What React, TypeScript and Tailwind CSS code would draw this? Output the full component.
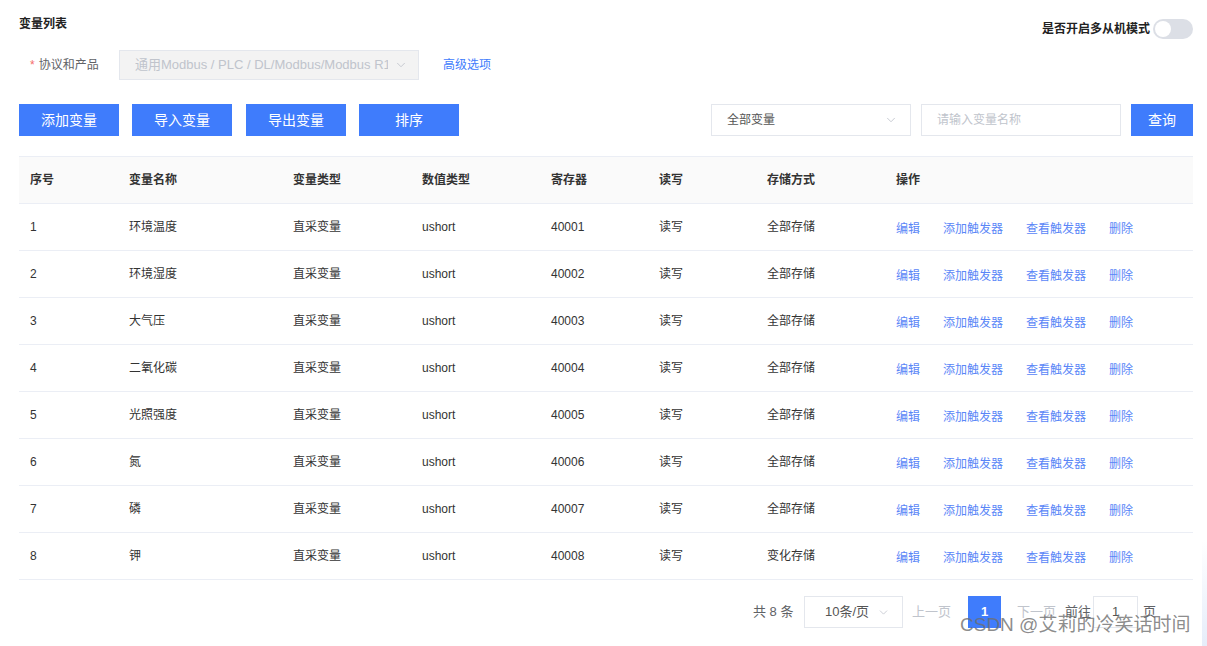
import { ChevronDown } from "lucide-react";

type Row = {
  id: number;
  name: string;
  register: string;
  storage: string;
};

const rows: Row[] = [
  { id: 1, name: "环境温度", register: "40001", storage: "全部存储" },
  { id: 2, name: "环境湿度", register: "40002", storage: "全部存储" },
  { id: 3, name: "大气压", register: "40003", storage: "全部存储" },
  { id: 4, name: "二氧化碳", register: "40004", storage: "全部存储" },
  { id: 5, name: "光照强度", register: "40005", storage: "全部存储" },
  { id: 6, name: "氮", register: "40006", storage: "全部存储" },
  { id: 7, name: "磷", register: "40007", storage: "全部存储" },
  { id: 8, name: "钾", register: "40008", storage: "变化存储" }
];

const columns = ["序号", "变量名称", "变量类型", "数值类型", "寄存器", "读写", "存储方式", "操作"];
const colWidths = ["w-[99px]", "w-[164px]", "w-[129px]", "w-[129px]", "w-[108px]", "w-[108px]", "w-[129px]", "flex-1"];

function PrimaryButton({ label, className }: { label: string; className: string }) {
  return (
    <button
      type="button"
      className={`h-[32px] bg-[#3f7cfc] text-[14px] text-white flex items-center justify-center ${className}`}
    >
      {label}
    </button>
  );
}

export default function App() {
  return (
    <div className="relative w-[1207px] h-[646px] overflow-hidden bg-white font-['Liberation_Sans','Noto_Sans_CJK_SC',sans-serif] text-[12px] text-[#333]">
      <div className="pl-[19px] pr-[14px]">
        <div className="flex justify-between">
          <div className="pt-[17px] leading-[14px] font-bold text-[#222]">变量列表</div>
          <div className="flex items-center pt-[19px] gap-[3px]">
            <span className="font-bold text-[#222] leading-[20px]">是否开启多从机模式</span>
            <span className="relative w-[40px] h-[20px] rounded-full bg-[#dcdfe6]">
              <span className="absolute left-[2px] top-[2px] w-[16px] h-[16px] rounded-full bg-white" />
            </span>
          </div>
        </div>

        <div className="mt-[11px] flex items-center h-[30px]">
          <div className="w-[100px] pl-[11px] text-[#606266]">
            <span className="text-[#f56c6c] mr-[4px]">*</span>协议和产品
          </div>
          <div className="w-[300px] h-[30px] border border-[#e4e7ed] bg-[#f3f3f3] flex items-center pl-[15px] pr-[10px] text-[#c0c4cc] text-[13px]">
            <span className="flex-1 min-w-0 whitespace-nowrap overflow-hidden">通用Modbus / PLC / DL/Modbus/Modbus R1</span>
            <ChevronDown size={14} strokeWidth={1.5} className="text-[#c0c4cc] ml-[6px] shrink-0" />
          </div>
          <span className="ml-[24px] text-[#3f7cfc]">高级选项</span>
        </div>

        <div className="mt-[24px] flex items-center">
          <div className="flex">
            <PrimaryButton label="添加变量" className="w-[100px]" />
            <PrimaryButton label="导入变量" className="w-[100px] ml-[13px]" />
            <PrimaryButton label="导出变量" className="w-[100px] ml-[14px]" />
            <PrimaryButton label="排序" className="w-[100px] ml-[13px]" />
          </div>
          <div className="ml-auto flex items-center gap-[10px]">
            <div className="w-[200px] h-[32px] border border-[#e4e7ed] flex items-center pl-[15px] pr-[12px]">
              <span className="flex-1 text-[#555]">全部变量</span>
              <ChevronDown size={14} strokeWidth={1.5} className="text-[#c0c4cc]" />
            </div>
            <div className="w-[200px] h-[32px] border border-[#e4e7ed] flex items-center pl-[15px] text-[#c0c4cc]">
              请输入变量名称
            </div>
            <PrimaryButton label="查询" className="w-[62px]" />
          </div>
        </div>

        <div className="mt-[20px] border-t border-[#ebeef5]">
          <div className="flex h-[47px] items-center bg-[#fafafa] border-b border-[#ebeef5] font-bold">
            {columns.map((c, i) => (
              <div key={c} className={`${colWidths[i]} pl-[11px]`}>
                {c}
              </div>
            ))}
          </div>
          {rows.map((r) => (
            <div key={r.id} className="flex h-[47px] items-center border-b border-[#ebeef5]">
              <div className={`${colWidths[0]} pl-[11px]`}>{r.id}</div>
              <div className={`${colWidths[1]} pl-[11px]`}>{r.name}</div>
              <div className={`${colWidths[2]} pl-[11px]`}>直采变量</div>
              <div className={`${colWidths[3]} pl-[11px]`}>ushort</div>
              <div className={`${colWidths[4]} pl-[11px]`}>{r.register}</div>
              <div className={`${colWidths[5]} pl-[11px]`}>读写</div>
              <div className={`${colWidths[6]} pl-[11px]`}>{r.storage}</div>
              <div className={`${colWidths[7]} pl-[11px] pt-[3px] flex gap-[23px] text-[#5a86f7]`}>
                <span>编辑</span>
                <span>添加触发器</span>
                <span>查看触发器</span>
                <span>删除</span>
              </div>
            </div>
          ))}
        </div>

        <div className="mt-[16px] flex items-center h-[32px] pl-[734px] text-[13px] whitespace-nowrap">
          <span className="w-[40px] shrink-0 text-[#606266]">共 8 条</span>
          <div className="ml-[11px] w-[99px] shrink-0 h-[32px] border border-[#e4e7ed] flex items-center pl-[20px] pr-[12px]">
            <span className="flex-1 text-[#555]">10条/页</span>
            <ChevronDown size={13} strokeWidth={1.5} className="text-[#c0c4cc]" />
          </div>
          <span className="ml-[9px] w-[40px] shrink-0 text-[#c0c4cc]">上一页</span>
          <span className="ml-[16px] w-[33px] shrink-0 h-[32px] bg-[#3f7cfc] text-white font-bold flex items-center justify-center">
            1
          </span>
          <span className="ml-[16px] w-[39px] shrink-0 text-[#c0c4cc]">下一页</span>
          <span className="ml-[9px] w-[26px] shrink-0 text-[#606266]">前往</span>
          <div className="ml-[2px] w-[45px] shrink-0 h-[32px] border border-[#e4e7ed] flex items-center justify-center text-[#555]">
            1
          </div>
          <span className="ml-[5px] shrink-0 text-[#606266]">页</span>
        </div>
      </div>

      <div className="absolute left-[960px] top-[611px] text-[19px] leading-[28px] text-[#6e6e6e]/80 whitespace-nowrap">
        CSDN @艾莉的冷笑话时间
      </div>
      <div className="absolute right-0 top-[540px] bottom-0 w-[5px] bg-gradient-to-b from-white to-[#e6edfa]" />
    </div>
  );
}
